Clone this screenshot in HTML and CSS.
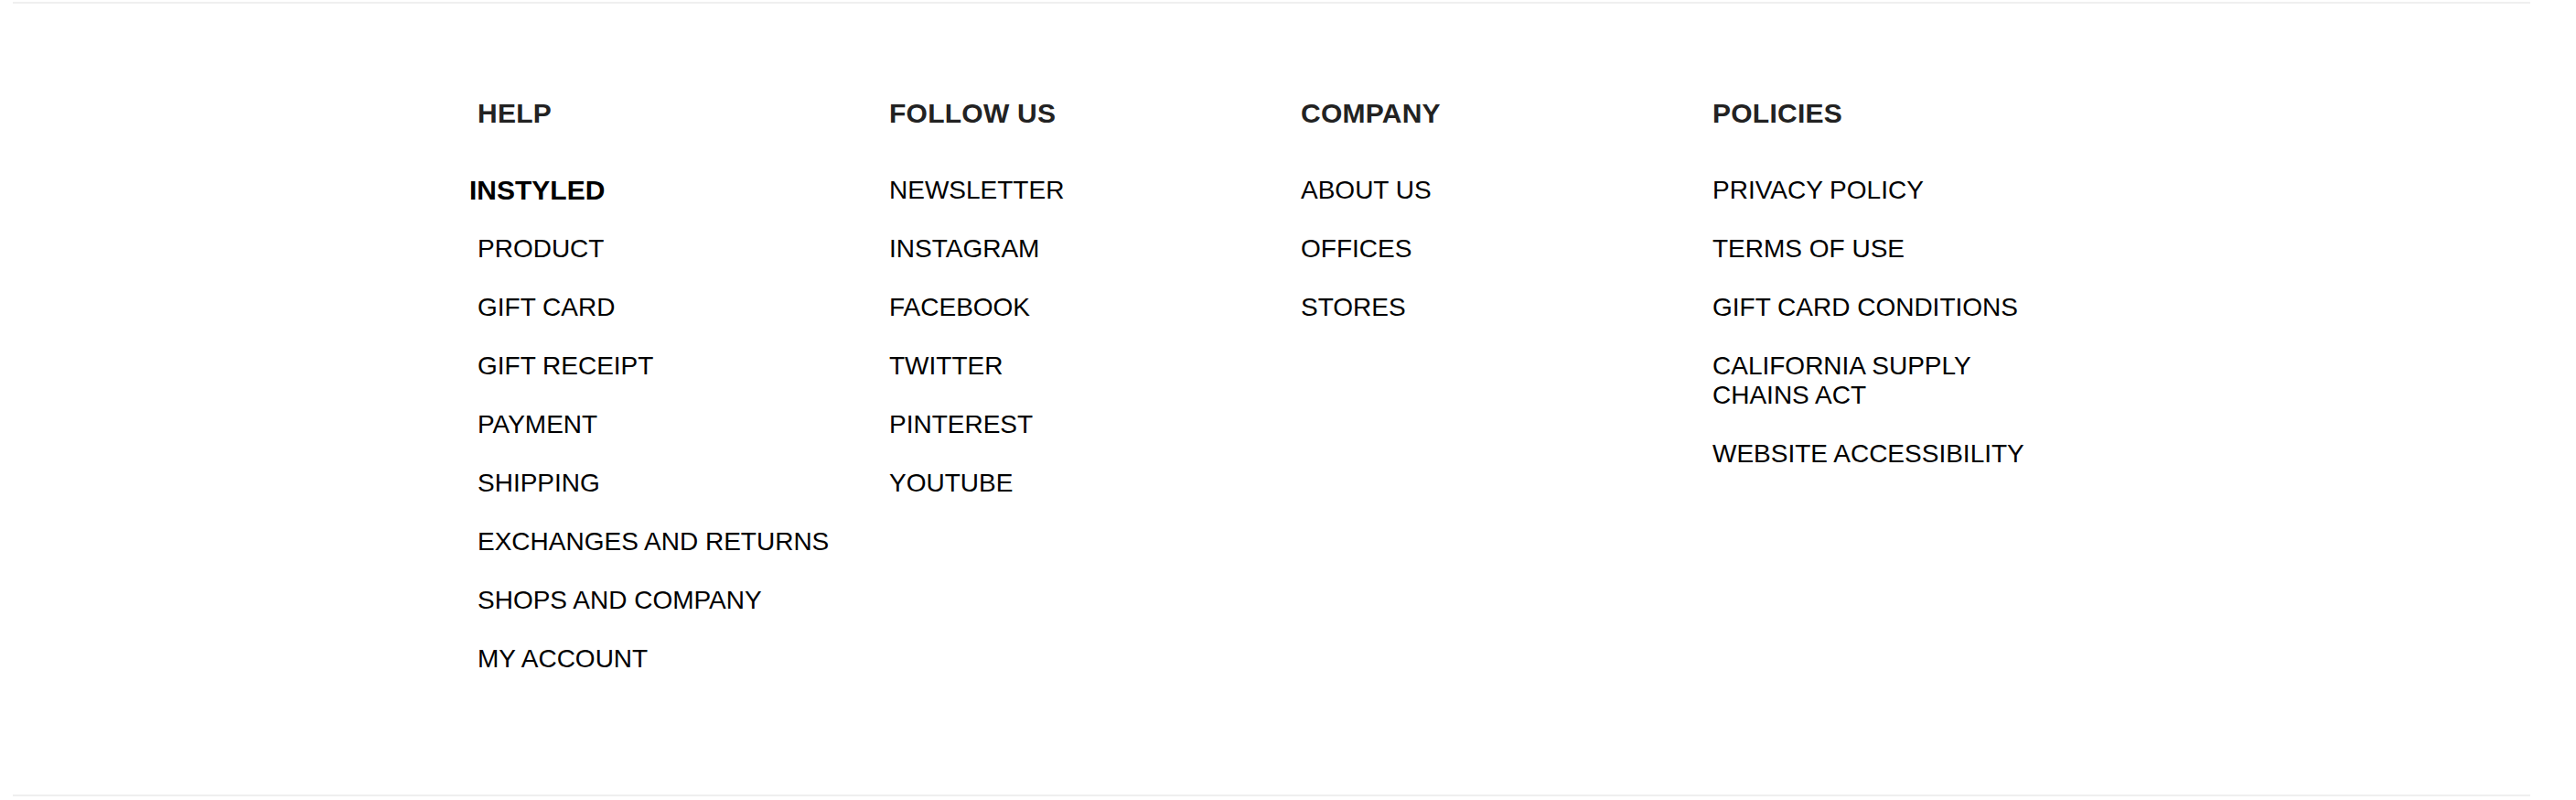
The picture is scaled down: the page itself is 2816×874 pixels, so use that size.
FILE: index.html
```html
<!DOCTYPE html>
<html lang="en">
<head>
<meta charset="utf-8">
<title>Footer</title>
<link rel="stylesheet" href="styles.css">
</head>
<body>
<footer class="site-footer">
  <div class="footer-grid">
    <section class="footer-col">
      <h3 class="footer-title">HELP</h3>
      <ul class="footer-list">
        <li class="footer-brand">INSTYLED</li>
        <li><a href="#">PRODUCT</a></li>
        <li><a href="#">GIFT CARD</a></li>
        <li><a href="#">GIFT RECEIPT</a></li>
        <li><a href="#">PAYMENT</a></li>
        <li><a href="#">SHIPPING</a></li>
        <li><a href="#">EXCHANGES AND RETURNS</a></li>
        <li><a href="#">SHOPS AND COMPANY</a></li>
        <li><a href="#">MY ACCOUNT</a></li>
      </ul>
    </section>
    <section class="footer-col">
      <h3 class="footer-title">FOLLOW US</h3>
      <ul class="footer-list">
        <li><a href="#">NEWSLETTER</a></li>
        <li><a href="#">INSTAGRAM</a></li>
        <li><a href="#">FACEBOOK</a></li>
        <li><a href="#">TWITTER</a></li>
        <li><a href="#">PINTEREST</a></li>
        <li><a href="#">YOUTUBE</a></li>
      </ul>
    </section>
    <section class="footer-col">
      <h3 class="footer-title">COMPANY</h3>
      <ul class="footer-list">
        <li><a href="#">ABOUT US</a></li>
        <li><a href="#">OFFICES</a></li>
        <li><a href="#">STORES</a></li>
      </ul>
    </section>
    <section class="footer-col">
      <h3 class="footer-title">POLICIES</h3>
      <ul class="footer-list">
        <li><a href="#">PRIVACY POLICY</a></li>
        <li><a href="#">TERMS OF USE</a></li>
        <li><a href="#">GIFT CARD CONDITIONS</a></li>
        <li><a href="#">CALIFORNIA SUPPLY CHAINS ACT</a></li>
        <li><a href="#">WEBSITE ACCESSIBILITY</a></li>
      </ul>
    </section>
  </div>
</footer>
</body>
</html>
```
FILE: styles.css
```css
html, body {
  margin: 0;
  padding: 0;
  background: #ffffff;
}

body {
  font-family: "Liberation Sans", Arial, Helvetica, sans-serif;
  color: #000000;
}

.site-footer {
  margin: 2px 50px 0 14px;
  border-top: 2px solid #efefef;
  border-bottom: 2px solid #efefef;
  padding: 104px 0 132px 508px;
}

.footer-grid {
  display: grid;
  grid-template-columns: repeat(4, 392px);
  column-gap: 58px;
  align-items: start;
}

.footer-col {
  display: flex;
  flex-direction: column;
}

.footer-title {
  margin: 0 0 52px 0;
  font-size: 30px;
  line-height: 32px;
  font-weight: 700;
  letter-spacing: 0.25px;
  color: #222222;
}

.footer-list {
  list-style: none;
  margin: 0;
  padding: 0;
  display: flex;
  flex-direction: column;
  gap: 32px;
}

.footer-list li {
  font-size: 28px;
  line-height: 32px;
}

.footer-list a {
  color: #000000;
  text-decoration: none;
}

.footer-list .footer-brand {
  font-size: 30px;
  font-weight: 700;
  margin-left: -9px;
  color: #000000;
}
```
